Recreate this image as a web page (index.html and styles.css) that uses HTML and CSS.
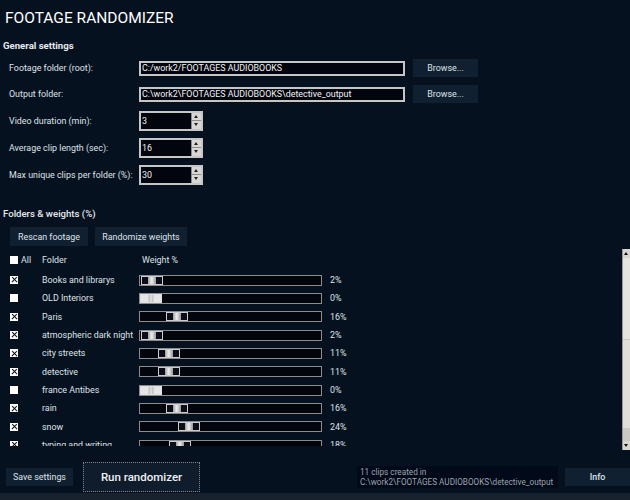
FILE: index.html
```html
<!DOCTYPE html>
<html>
<head>
<meta charset="utf-8">
<link rel="stylesheet" href="styles.css">
</head>
<body>
<div class="app">
  <h1 class="title">FOOTAGE RANDOMIZER</h1>

  <h2 class="section-title">General settings</h2>
  <div class="form">
    <label class="lbl">Footage folder (root):</label>
    <div class="field"><div class="text-input">C:/work2/FOOTAGES AUDIOBOOKS</div></div>
    <button class="btn browse">Browse...</button>

    <label class="lbl">Output folder:</label>
    <div class="field"><div class="text-input">C:\work2\FOOTAGES AUDIOBOOKS\detective_output</div></div>
    <button class="btn browse">Browse...</button>

    <label class="lbl">Video duration (min):</label>
    <div class="field"><div class="spin"><span class="spin-val">3</span><span class="spin-btns"><span class="sb up"></span><span class="sb down"></span></span></div></div>
    <span></span>

    <label class="lbl">Average clip length (sec):</label>
    <div class="field"><div class="spin"><span class="spin-val">16</span><span class="spin-btns"><span class="sb up"></span><span class="sb down"></span></span></div></div>
    <span></span>

    <label class="lbl">Max unique clips per folder (%):</label>
    <div class="field"><div class="spin"><span class="spin-val">30</span><span class="spin-btns"><span class="sb up"></span><span class="sb down"></span></span></div></div>
    <span></span>
  </div>

  <h2 class="section-title folders-title">Folders &amp; weights (%)</h2>
  <div class="toolbar">
    <button class="btn tool rescan">Rescan footage</button>
    <button class="btn tool randomize">Randomize weights</button>
  </div>

  <div class="list">
    <div class="list-main">
      <div class="list-head">
        <div class="head-all"><span class="cb"></span><span>All</span></div>
        <div>Folder</div>
        <div class="head-weight">Weight %</div>
      </div>
      <div class="rows">
        <div class="row"><span class="cb checked"></span><span class="name">Books and librarys</span><div class="track"><span class="thumb" style="left:1px"></span></div><span class="pct">2%</span></div>
        <div class="row"><span class="cb"></span><span class="name">OLD Interiors</span><div class="track"><span class="thumb off" style="left:0px"></span></div><span class="pct">0%</span></div>
        <div class="row"><span class="cb checked"></span><span class="name">Paris</span><div class="track"><span class="thumb" style="left:26px"></span></div><span class="pct">16%</span></div>
        <div class="row"><span class="cb checked"></span><span class="name">atmospheric dark night</span><div class="track"><span class="thumb" style="left:1px"></span></div><span class="pct">2%</span></div>
        <div class="row"><span class="cb checked"></span><span class="name">city streets</span><div class="track"><span class="thumb" style="left:18px"></span></div><span class="pct">11%</span></div>
        <div class="row"><span class="cb checked"></span><span class="name">detective</span><div class="track"><span class="thumb" style="left:18px"></span></div><span class="pct">11%</span></div>
        <div class="row"><span class="cb"></span><span class="name">france Antibes</span><div class="track"><span class="thumb off" style="left:0px"></span></div><span class="pct">0%</span></div>
        <div class="row"><span class="cb checked"></span><span class="name">rain</span><div class="track"><span class="thumb" style="left:26px"></span></div><span class="pct">16%</span></div>
        <div class="row"><span class="cb checked"></span><span class="name">snow</span><div class="track"><span class="thumb" style="left:38px"></span></div><span class="pct">24%</span></div>
        <div class="row"><span class="cb checked"></span><span class="name">typing and writing</span><div class="track"><span class="thumb" style="left:29px"></span></div><span class="pct">18%</span></div>
      </div>
    </div>
    <div class="scrollbar">
      <span class="sarrow up"></span>
      <span class="sthumb"></span>
      <span class="strack"></span>
      <span class="sband"></span>
      <span class="sarrow down"></span>
    </div>
  </div>

  <div class="footer">
    <button class="btn save">Save settings</button>
    <button class="btn run">Run randomizer</button>
    <div class="status">11 clips created in<br>C:\work2\FOOTAGES AUDIOBOOKS\detective_output</div>
    <button class="btn info">Info</button>
  </div>
  <div class="strip"></div>
</div>
</body>
</html>
```

FILE: styles.css
```css
* { box-sizing: border-box; }

html, body {
  margin: 0;
  padding: 0;
  background: #06111f;
}

body {
  font-family: "Roboto", "Liberation Sans", sans-serif;
  color: #dfe3e8;
  font-size: 8.9px;
}

.app {
  width: 630px;
  height: 500px;
  overflow: hidden;
  display: flex;
  flex-direction: column;
  background: #06111f;
}

.title {
  margin: 8px 0 0 5px;
  font-size: 15.5px;
  line-height: 20px;
  font-weight: 400;
  color: #ffffff;
}

.section-title {
  margin: 11px 0 0 3px;
  font-size: 9.6px;
  line-height: 14px;
  font-weight: 700;
  color: #e6e9ee;
}

.folders-title {
  margin-top: 19px;
  font-weight: 500;
}

.form {
  margin-top: 2px;
  padding-left: 9px;
  display: grid;
  grid-template-columns: 130px 274px 65px;
  grid-template-rows: 26px 26px 27px 27px 27px;
  align-items: center;
}

.lbl {
  color: #dfe3e8;
  white-space: nowrap;
}

.text-input {
  width: 266px;
  height: 15px;
  border: 2px solid #c6c6c6;
  background: #02040e;
  color: #f2f2f2;
  line-height: 11px;
  padding-left: 1px;
  white-space: nowrap;
  overflow: hidden;
}

.btn {
  font-family: inherit;
  font-size: 8.9px;
  color: #dfe3e8;
  background: #112030;
  border: none;
  padding: 0;
  margin: 0;
  cursor: default;
}

.browse {
  width: 65px;
  height: 18px;
}

.spin {
  width: 64px;
  height: 20px;
  border: 2px solid #c6c6c6;
  background: #02040e;
  display: flex;
  justify-content: space-between;
}

.spin-val {
  color: #f2f2f2;
  line-height: 16px;
  padding-left: 1px;
}

.spin-btns {
  width: 10px;
  display: flex;
  flex-direction: column;
  gap: 1px;
  background: #8c8c8c;
  border-left: 1px solid #8c8c8c;
}

.sb {
  flex: 1;
  background: #d9d7d3;
  position: relative;
}

.sb::after {
  content: "";
  position: absolute;
  left: 2px;
  top: 2px;
  border-left: 2.5px solid transparent;
  border-right: 2.5px solid transparent;
}

.sb.up::after { border-bottom: 3px solid #202020; }
.sb.down::after { border-top: 3px solid #202020; }

.toolbar {
  margin-top: 6px;
  padding-left: 10px;
  display: flex;
  gap: 7px;
}

.tool {
  height: 19px;
}

.rescan { width: 78px; }
.randomize { width: 92px; }

.list {
  margin-top: 3px;
  height: 201px;
  display: flex;
}

.list-main {
  flex: 1;
  display: flex;
  flex-direction: column;
}

.list-head {
  height: 22px;
  padding-left: 10px;
  display: grid;
  grid-template-columns: 32px 97px 183px;
  align-items: center;
}

.head-all {
  display: flex;
  align-items: center;
  gap: 3px;
}

.head-weight {
  padding-left: 3px;
}

.rows {
  height: 175px;
  overflow: hidden;
}

.row {
  height: 18.33px;
  padding-left: 10px;
  display: grid;
  grid-template-columns: 32px 97px 183px auto;
  align-items: center;
}

.cb {
  display: inline-block;
  width: 8px;
  height: 8px;
  background: #ffffff;
  position: relative;
}

.cb.checked::before,
.cb.checked::after {
  content: "";
  position: absolute;
  left: 0.5px;
  top: 3.3px;
  width: 7px;
  height: 1.4px;
  background: #111;
  transform: rotate(45deg);
}

.cb.checked::after {
  transform: rotate(-45deg);
}

.name {
  color: #dfe3e8;
  white-space: nowrap;
}

.track {
  height: 11px;
  border: 1px solid #8c8c8c;
  background: #03050d;
  position: relative;
}

.thumb {
  position: absolute;
  top: 0;
  width: 22px;
  height: 9px;
  border: 1px solid #cdcdcd;
  background: linear-gradient(to right,
    #0b0e18 0, #0b0e18 6px,
    #9a9a9a 6px, #cfcfcf 8px, #efefef 10px, #bcbcbc 12px, #9a9a9a 14px,
    #0b0e18 14px);
}

.thumb.off {
  border-color: #e0e0e0;
  background: linear-gradient(to right,
    #e6e6e6 0, #e6e6e6 7px,
    #bdbdbd 8px, #e2e2e2 10px, #bdbdbd 12px,
    #e6e6e6 13px);
}

.pct {
  padding-left: 8px;
  color: #dfe3e8;
}

.scrollbar {
  width: 8px;
  display: flex;
  flex-direction: column;
  background: #e3e0db;
  border-left: 1px solid #9a9893;
  height: 201px;
}

.sarrow {
  height: 9px;
  background: #d8d5d0;
  position: relative;
}

.sarrow::after {
  content: "";
  position: absolute;
  left: 1px;
  top: 3px;
  border-left: 2.5px solid transparent;
  border-right: 2.5px solid transparent;
}

.sarrow.up::after { border-bottom: 3px solid #111; }
.sarrow.down::after { border-top: 3px solid #111; }

.sthumb {
  height: 82px;
  background: #e6e3df;
  border-bottom: 1px solid #c9c6c1;
}

.strack {
  flex: 1;
  background: #e1ded9;
}

.sband {
  height: 13px;
  background: #cbc8c3;
}

.footer {
  margin-top: auto;
  height: 30px;
  padding-left: 6px;
  display: flex;
  align-items: center;
}

.save {
  width: 67px;
  height: 18px;
}

.run {
  margin-left: 10px;
  width: 117px;
  height: 30px;
  border: 1px dotted #7d8894;
  background: #0e1c2b;
  font-size: 11.5px;
  font-weight: 500;
  color: #eef1f4;
}

.status {
  margin-left: 157px;
  width: 201px;
  height: 22px;
  background: #020918;
  color: #9ba4ae;
  font-size: 8.2px;
  line-height: 10px;
  padding: 1px 0 0 3px;
  white-space: nowrap;
  overflow: hidden;
}

.info {
  margin-left: 7px;
  width: 65px;
  height: 18px;
  font-weight: 500;
}

.strip {
  margin-top: 1px;
  height: 7px;
  background: #18222f;
}
```
